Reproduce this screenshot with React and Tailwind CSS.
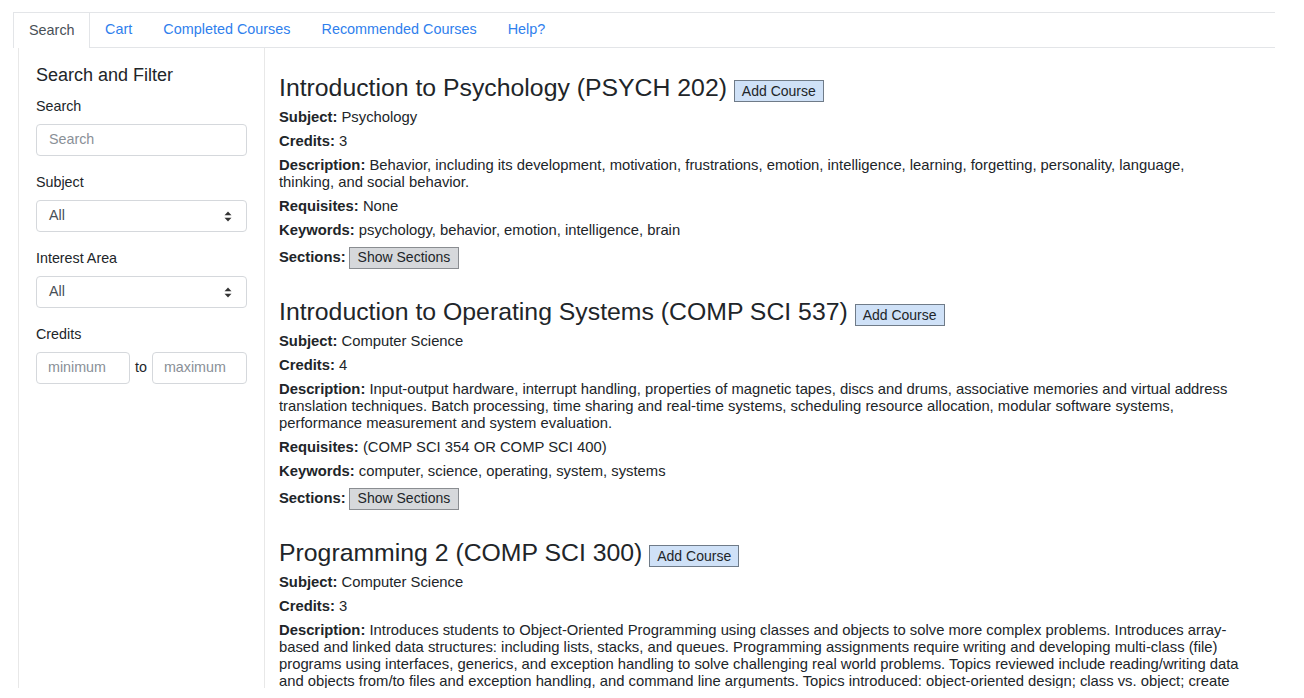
import React from "react";

const courses = [
  {
    title: "Introduction to Psychology (PSYCH 202)",
    subject: "Psychology",
    credits: "3",
    description:
      "Behavior, including its development, motivation, frustrations, emotion, intelligence, learning, forgetting, personality, language, thinking, and social behavior.",
    requisites: "None",
    keywords: "psychology, behavior, emotion, intelligence, brain",
  },
  {
    title: "Introduction to Operating Systems (COMP SCI 537)",
    subject: "Computer Science",
    credits: "4",
    description:
      "Input-output hardware, interrupt handling, properties of magnetic tapes, discs and drums, associative memories and virtual address translation techniques. Batch processing, time sharing and real-time systems, scheduling resource allocation, modular software systems, performance measurement and system evaluation.",
    requisites: "(COMP SCI 354 OR COMP SCI 400)",
    keywords: "computer, science, operating, system, systems",
  },
  {
    title: "Programming 2 (COMP SCI 300)",
    subject: "Computer Science",
    credits: "3",
    description:
      "Introduces students to Object-Oriented Programming using classes and objects to solve more complex problems. Introduces array-based and linked data structures: including lists, stacks, and queues. Programming assignments require writing and developing multi-class (file) programs using interfaces, generics, and exception handling to solve challenging real world problems. Topics reviewed include reading/writing data and objects from/to files and exception handling, and command line arguments. Topics introduced: object-oriented design; class vs. object; create and define interfaces and iterators; searching and sorting; abstract data types (List, Stack, Queue, PriorityQueue(Heap), Binary Search Tree); generic interfaces (parametric polymorphism); how to design and write test methods and classes; array-based vs. linked node implementations; introduction to complexity analysis; recursion.",
    requisites: "(COMP SCI 200 OR COMP SCI 220 OR COMP SCI 302)",
    keywords: "computer, science, programming, java, data, structures",
  },
];

function UpDown() {
  return (
    <svg width="8" height="11" viewBox="0 0 8 11" className="text-[#333]">
      <path d="M4 0.5 L7.5 4.3 L0.5 4.3 Z" fill="currentColor" />
      <path d="M4 10.5 L7.5 6.7 L0.5 6.7 Z" fill="currentColor" />
    </svg>
  );
}

function Field({ label, children }) {
  return (
    <div className="mb-4">
      <div className="text-[14.3px] leading-[20px] mb-2 text-[#212529]">{label}</div>
      {children}
    </div>
  );
}

function SelectBox() {
  return (
    <div className="h-[32px] w-full border border-[#d5d8dc] rounded-[4px] flex items-center justify-between pl-[12px] pr-[14px] text-[14.3px] text-[#495057]">
      <span>All</span>
      <UpDown />
    </div>
  );
}

function Course({ c }) {
  return (
    <div className="mb-[28px]">
      <h2 className="text-[24.8px] leading-[30px] font-normal text-[#212529]">
        {c.title}{" "}
        <button className="align-baseline bg-[#cfe1f7] border border-[#6f7b88] text-[14px] leading-[17px] px-[7px] pt-[2px] pb-[1px] text-[#212529]">
          Add Course
        </button>
      </h2>
      <div className="text-[14.8px] leading-[17px] text-[#212529]">
        <p className="mt-[6px]">
          <b>Subject:</b> {c.subject}
        </p>
        <p className="mt-[7px]">
          <b>Credits:</b> {c.credits}
        </p>
        <p className="mt-[7px]">
          <b>Description:</b> {c.description}
        </p>
        <p className="mt-[7px]">
          <b>Requisites:</b> {c.requisites}
        </p>
        <p className="mt-[7px]">
          <b>Keywords:</b> {c.keywords}
        </p>
        <div className="mt-[7px] h-[23px] flex items-center gap-[3px]">
          <b>Sections:</b>
          <button className="h-[22px] bg-[#d6d8db] border border-[#8a8d91] text-[14px] px-[8px] text-[#212529]">
            Show Sections
          </button>
        </div>
      </div>
    </div>
  );
}

export default function App() {
  const tabs = ["Cart", "Completed Courses", "Recommended Courses", "Help?"];
  return (
    <div
      className="w-[1304px] h-[698px] bg-white overflow-hidden"
      style={{ fontFamily: '"Liberation Sans", Arial, sans-serif' }}
    >
      <div className="ml-[13px] pt-[12px] w-[1262px] h-[688px] flex flex-col overflow-hidden">
        <nav className="flex border-t border-[#e3e5e8] h-[36px] shrink-0 text-[14.4px]">
          <div className="h-[35px] pl-[15px] pr-[14px] flex items-center border-l border-r border-[#e3e5e8] text-[#495057] bg-white">
            Search
          </div>
          {tabs.map((t) => (
            <div
              key={t}
              className="h-[35px] px-[15.5px] flex items-center border-b border-[#e3e5e8] text-[#2f80ed]"
            >
              {t}
            </div>
          ))}
          <div className="flex-1 h-[35px] border-b border-[#e3e5e8]" />
        </nav>
        <div className="flex flex-1 min-h-0">
          <aside className="ml-[5px] w-[247px] shrink-0 border-l border-r border-[#e8e8e8] pt-[16px] pl-[17px] pr-[17px]">
            <div className="text-[18px] leading-[22px] text-[#212529] mb-[10px]">Search and Filter</div>
            <Field label="Search">
              <div className="h-[32px] w-full border border-[#d5d8dc] rounded-[4px] flex items-center pl-[12px] text-[14.3px] text-[#8a9097]">
                Search
              </div>
            </Field>
            <Field label="Subject">
              <SelectBox />
            </Field>
            <Field label="Interest Area">
              <SelectBox />
            </Field>
            <Field label="Credits">
              <div className="flex items-center h-[32px] text-[14.3px]">
                <div className="w-[94px] h-full border border-[#d5d8dc] rounded-[4px] flex items-center pl-[11px] text-[#8a9097]">
                  minimum
                </div>
                <span className="mx-[5px] text-[#212529]">to</span>
                <div className="flex-1 h-full border border-[#d5d8dc] rounded-[4px] flex items-center pl-[11px] text-[#8a9097]">
                  maximum
                </div>
              </div>
            </Field>
          </aside>
          <main className="pl-[14px] pt-[25px] w-[976px] shrink-0 overflow-hidden">
            {courses.map((c) => (
              <Course key={c.title} c={c} />
            ))}
          </main>
        </div>
      </div>
    </div>
  );
}
